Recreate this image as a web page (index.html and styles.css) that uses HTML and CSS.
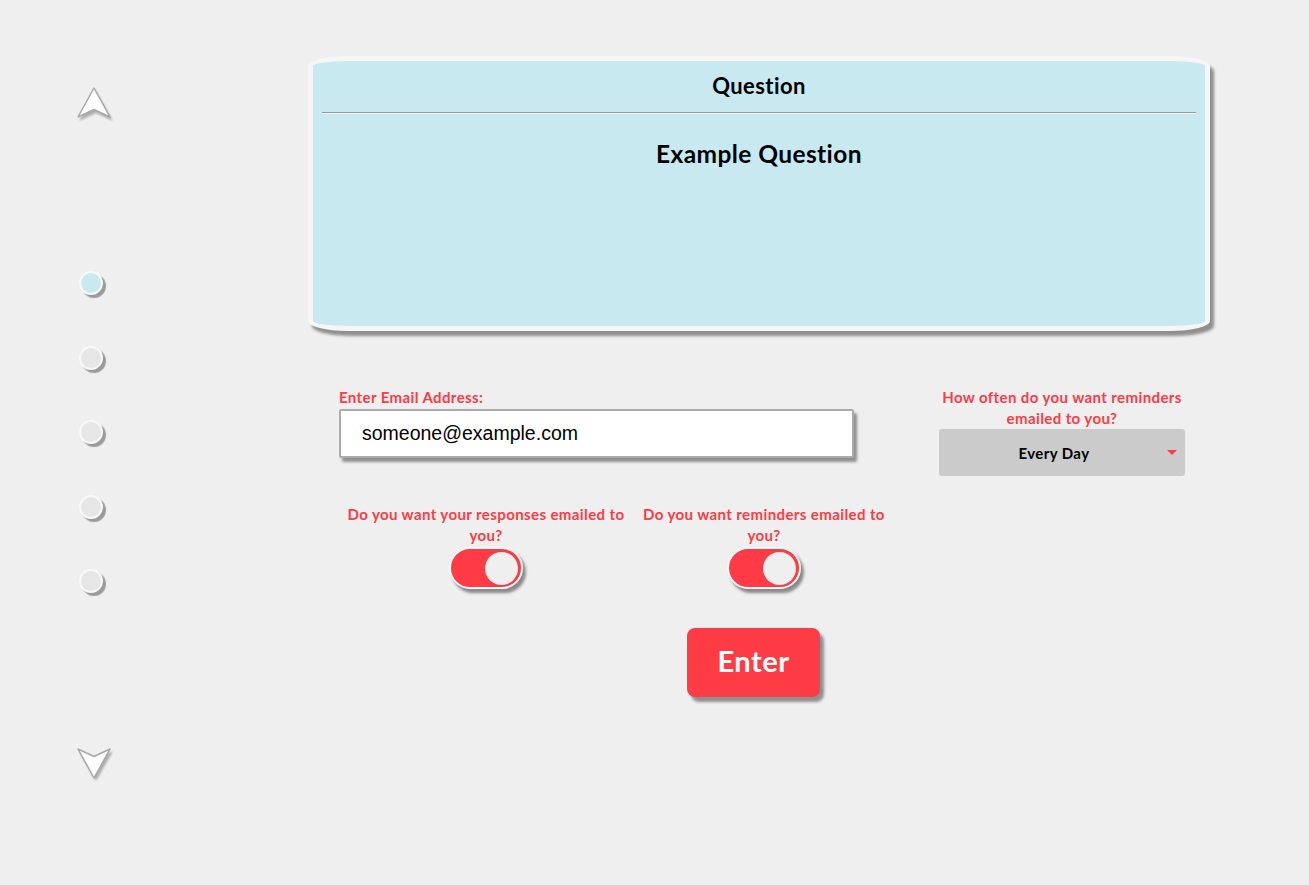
FILE: index.html
```html
<!DOCTYPE html>
<html lang="en">
<head>
<meta charset="utf-8">
<title>Question</title>
<link rel="stylesheet" href="styles.css">
</head>
<body>
<div class="page">
  <nav class="side-nav">
    <svg class="nav-arrow" width="40" height="38" viewBox="0 0 40 38">
      <path class="arrow-shadow" d="M19 4 L36 34 L19 26 L2 34 Z"/>
      <path class="arrow-face" d="M17 1 L33 30 L17 22.5 L1 30 Z"/>
    </svg>
    <div class="dots">
      <span class="dot active"></span>
      <span class="dot"></span>
      <span class="dot"></span>
      <span class="dot"></span>
      <span class="dot"></span>
    </div>
    <svg class="nav-arrow down" width="40" height="38" viewBox="0 0 40 38">
      <path class="arrow-shadow" d="M19 34 L36 4 L19 12 L2 4 Z"/>
      <path class="arrow-face" d="M17 31 L33 2 L17 9.5 L1 2 Z"/>
    </svg>
  </nav>

  <main class="main">
    <section class="card">
      <h2 class="card-title">Question</h2>
      <hr class="card-rule">
      <p class="card-question">Example Question</p>
    </section>

    <form class="form">
      <div class="row row-top">
        <div class="email-block">
          <label class="label" for="email">Enter Email Address:</label>
          <input class="email-input" id="email" type="text" value="someone@example.com">
        </div>
        <div class="freq-block">
          <div class="label center">How often do you want reminders<br>emailed to you?</div>
          <div class="select">
            <span class="select-text">Every Day</span>
            <span class="select-caret"></span>
          </div>
        </div>
      </div>

      <div class="row row-toggles">
        <div class="toggle-block first">
          <div class="label center">Do you want your responses emailed to<br>you?</div>
          <span class="toggle"><span class="knob"></span></span>
        </div>
        <div class="toggle-block second">
          <div class="label center">Do you want reminders emailed to<br>you?</div>
          <span class="toggle"><span class="knob"></span></span>
        </div>
      </div>

      <div class="row row-submit">
        <button class="enter-btn" type="button">Enter</button>
      </div>
    </form>
  </main>
</div>
</body>
</html>
```

FILE: styles.css
```css
* { box-sizing: border-box; }

html, body {
  margin: 0;
  padding: 0;
  background: #efefef;
  font-family: "Lato", "Liberation Sans", sans-serif;
}

.page {
  display: flex;
  width: 1309px;
  height: 885px;
}

.side-nav {
  width: 308px;
  display: flex;
  flex-direction: column;
  align-items: flex-start;
  padding-top: 87px;
  padding-left: 77px;
}

.nav-arrow { display: block; }
.nav-arrow.down { margin-top: 154px; }

.arrow-shadow { fill: rgba(0,0,0,0.28); filter: blur(1px); }
.arrow-face { fill: #ffffff; stroke: #a9a9a9; stroke-width: 1.5; stroke-linejoin: round; }

.dots {
  display: flex;
  flex-direction: column;
  gap: 50.5px;
  margin-top: 146px;
  padding-left: 2px;
}

.dot {
  display: block;
  width: 24px;
  height: 24px;
  border-radius: 50%;
  background: #e6e6e6;
  border: 2px solid #f8f8f8;
  box-shadow: 3px 3px 1px #9a9a9a;
}
.dot.active { background: #c9e9f1; }

.main {
  width: 902px;
  padding-top: 56px;
}

.card {
  height: 275px;
  background: #c9e9f1;
  border: 5px solid #f6f6f6;
  border-radius: 40px 40px 40px 40px / 10px 10px 10px 10px;
  box-shadow: 4px 5px 3px #8f8f8f;
  padding: 0 9px;
  text-align: center;
}

.card-title {
  margin: 0;
  padding-top: 12px;
  font-size: 22px;
  line-height: 26px;
  font-weight: 700;
  letter-spacing: 0.4px;
  color: #000;
}

.card-rule {
  margin: 13px 0 0;
  height: 0;
  border: 0;
  border-top: 1px solid #9a9a9a;
  border-bottom: 1px solid #f2f2f2;
}

.card-question {
  margin: 26px 0 0;
  font-size: 24.5px;
  line-height: 28px;
  font-weight: 700;
  letter-spacing: 0.4px;
  color: #000;
}

.form {
  padding-left: 31px;
}

.label {
  display: block;
  color: #ff3b45;
  font-size: 15px;
  line-height: 21px;
  font-weight: 700;
  letter-spacing: 0.4px;
}
.label.center { text-align: center; }

.row { display: flex; }

.row-top {
  margin-top: 56px;
  align-items: flex-start;
}

.email-block {
  width: 517px;
}

.email-input {
  display: block;
  width: 515px;
  height: 49px;
  margin-top: 1px;
  border: 2px solid #ababab;
  border-radius: 2px;
  background: #fff;
  box-shadow: 3px 4px 3px #8f8f8f;
  padding: 0 0 0 21px;
  font-family: "Liberation Sans", Arial, sans-serif;
  font-size: 19.5px;
  color: #000;
  outline: none;
}

.freq-block {
  width: 246px;
  margin-left: 83px;
}

.select {
  position: relative;
  height: 47px;
  margin-top: 0;
  background: #cbcbcb;
  border-radius: 3px;
  display: flex;
  align-items: center;
  justify-content: center;
  padding-right: 16px;
}

.select-text {
  font-size: 15px;
  font-weight: 700;
  letter-spacing: 0.4px;
  color: #000;
}

.select-caret {
  position: absolute;
  right: 8px;
  top: 21px;
  width: 0;
  height: 0;
  border-left: 5px solid transparent;
  border-right: 5px solid transparent;
  border-top: 5px solid #ff3b45;
}

.row-toggles {
  margin-top: 28px;
}

.toggle-block {
  display: flex;
  flex-direction: column;
  align-items: center;
}
.toggle-block.first { width: 298px; margin-left: -2px; }
.toggle-block.second { width: 258px; }

.toggle {
  position: relative;
  display: block;
  width: 74px;
  height: 42px;
  margin-top: 1px;
  background: #ff3b45;
  border: 2px solid #f7f7f7;
  border-radius: 21px;
  box-shadow: 3px 4px 3px #8a8a8a;
}

.knob {
  position: absolute;
  right: 3px;
  top: 2.5px;
  width: 33px;
  height: 33px;
  border-radius: 50%;
  background: #efefef;
}

.row-submit {
  margin-top: 39px;
  padding-left: 348px;
}

.enter-btn {
  width: 133px;
  height: 69px;
  border: 0;
  border-radius: 8px;
  background: #ff3b45;
  color: #fff;
  font-family: "Lato", "Liberation Sans", sans-serif;
  font-size: 29px;
  font-weight: 700;
  letter-spacing: 0.5px;
  line-height: 64px;
  box-shadow: 4px 5px 3px #8f8f8f;
  padding: 0 0 4px;
}
```
